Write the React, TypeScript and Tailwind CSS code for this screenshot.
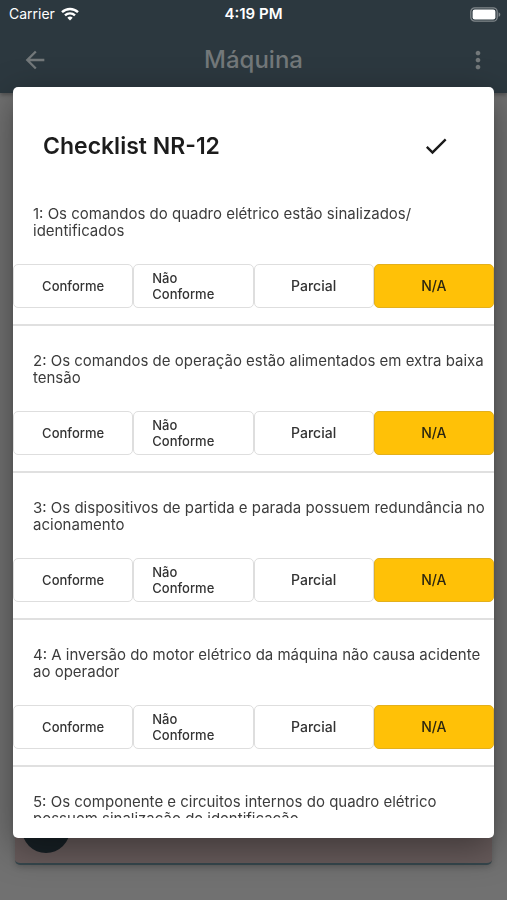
import { useState } from "react";
import { MdArrowBack, MdCheck, MdMoreVert } from "react-icons/md";

interface Question {
  id: number;
  text: string;
}

const OPTIONS = ["Conforme", "Não Conforme", "Parcial", "N/A"];

const QUESTIONS: Question[] = [
  { id: 1, text: "Os comandos do quadro elétrico estão sinalizados/\nidentificados" },
  { id: 2, text: "Os comandos de operação estão alimentados em extra baixa tensão" },
  { id: 3, text: "Os dispositivos de partida e parada possuem redundância no acionamento" },
  { id: 4, text: "A inversão do motor elétrico da máquina não causa acidente\nao operador" },
  { id: 5, text: "Os componente e circuitos internos do quadro elétrico\npossuem sinalização de identificação" },
];

const WifiIcon = () => (
  <svg viewBox="0 0 18 14" className="h-[14px] w-[18px]" fill="none" stroke="currentColor" strokeWidth="2.4">
    <path d="M1 5.2a11.5 11.5 0 0 1 16 0" />
    <path d="M4 8.4a7.2 7.2 0 0 1 10 0" />
    <path d="M9 13.4 6.3 10.7a3.9 3.9 0 0 1 5.4 0Z" fill="currentColor" stroke="none" />
  </svg>
);

const BatteryIcon = () => (
  <svg viewBox="0 0 31 15" className="h-[15px] w-[31px]" fill="none">
    <rect x="0.8" y="0.8" width="26.4" height="13.4" rx="4" stroke="#80878b" strokeWidth="1.3" />
    <rect x="2.6" y="2.6" width="22.8" height="9.8" rx="2.2" fill="#fff" />
    <path d="M28.6 5.2v4.6c1-.4 1.7-1.3 1.7-2.3s-.7-1.9-1.7-2.3Z" fill="#80878b" />
  </svg>
);

const StatusBar = () => (
  <div className="grid h-7 grid-cols-3 items-center px-1.5 text-white">
    <div className="flex items-center gap-1.5 pl-[3px] text-sm">
      <span>Carrier</span>
      <WifiIcon />
    </div>
    <div className="text-center text-[15px] font-semibold">4:19 PM</div>
    <div className="flex justify-end">
      <BatteryIcon />
    </div>
  </div>
);

const AppBar = () => (
  <div className="grid h-16 grid-cols-3 items-center px-[15px] text-[#73787a]">
    <button type="button" aria-label="Voltar" className="pl-1.5">
      <MdArrowBack size={28} />
    </button>
    <h1 className="text-center text-2xl font-medium">Máquina</h1>
    <button type="button" aria-label="Mais opções" className="justify-self-end">
      <MdMoreVert size={28} />
    </button>
  </div>
);

interface QuestionItemProps {
  question: Question;
  answer: string;
  onAnswer: (value: string) => void;
}

const QuestionItem = ({ question, answer, onAnswer }: QuestionItemProps) => (
  <li className="border-b-2 border-[#e0e0e0] pb-4">
    <p className="h-[59px] pr-2 pl-5 text-[15px] leading-[17px] whitespace-pre-line text-[#3c3c3c]">
      {`${question.id}: ${question.text}`}
    </p>
    <div className="grid grid-cols-4">
      {OPTIONS.map((option) => (
        <button
          key={option}
          type="button"
          aria-pressed={answer === option}
          onClick={() => onAnswer(option)}
          className={`flex h-11 items-center justify-center rounded-[5px] border px-[18px] text-left leading-4 font-medium ${
            option.includes("Conforme") ? "text-[13px]" : "text-sm"
          } ${
            answer === option
              ? "border-[#e3b01c] bg-[#ffc107] text-[#2c2610]"
              : "border-[#dedede] bg-white text-[#333333]"
          }`}
        >
          {option}
        </button>
      ))}
    </div>
  </li>
);

const ChecklistDialog = () => {
  const [answers, setAnswers] = useState<Record<number, string>>({});

  return (
    <div
      role="dialog"
      aria-labelledby="checklist-title"
      className="flex h-full flex-col overflow-hidden rounded-[5px] bg-white pb-5 shadow-[0_10px_36px_rgba(0,0,0,0.4)]"
    >
      <div className="flex h-[118px] shrink-0 items-center justify-between pr-11 pl-[30px] text-[#1c1c1c]">
        <h2 id="checklist-title" className="text-[23px] font-semibold">
          Checklist NR-12
        </h2>
        <button type="button" aria-label="Salvar">
          <MdCheck size={28} />
        </button>
      </div>
      <ul className="flex min-h-0 flex-1 flex-col gap-[26px] overflow-y-auto [scrollbar-width:none]">
        {QUESTIONS.map((question) => (
          <QuestionItem
            key={question.id}
            question={question}
            answer={answers[question.id] ?? "N/A"}
            onAnswer={(value) => setAnswers({ ...answers, [question.id]: value })}
          />
        ))}
      </ul>
    </div>
  );
};

export default function App() {
  return (
    <div className="flex h-screen flex-col overflow-hidden bg-[#717171] font-['Inter',sans-serif]">
      <header className="shrink-0 bg-[#2c383f] pb-px shadow-[0_2px_4px_rgba(0,0,0,0.3)]">
        <StatusBar />
        <AppBar />
      </header>
      <main className="flex flex-1 flex-col px-[15px] pt-4 pb-[35px]">
        <div className="flex flex-1 items-end rounded-[5px] border-b-2 border-[#36474d] bg-[#675b5b] px-[7px] pb-2.5 shadow-[0_2px_6px_rgba(0,0,0,0.2)]">
          <div className="size-12 rounded-full bg-[#182126]" />
        </div>
      </main>
      <div className="fixed inset-0 px-[13px] pt-[87px] pb-[62px]">
        <ChecklistDialog />
      </div>
    </div>
  );
}
